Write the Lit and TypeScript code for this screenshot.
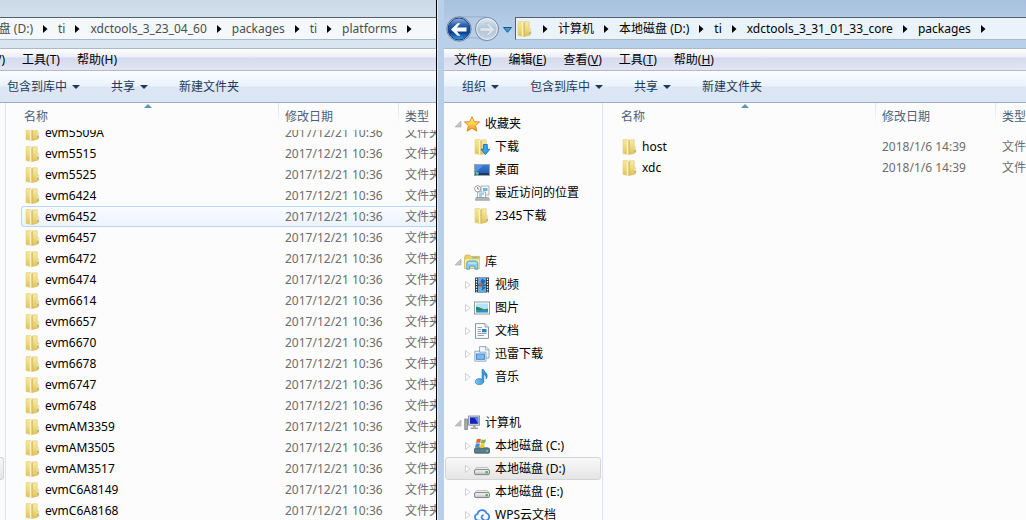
import { LitElement, html, svg, css, nothing } from "lit";
import { customElement, property } from "lit/decorators.js";
import { classMap } from "lit/directives/class-map.js";

type FileRow = { name: string; date: string; type: string; hover?: boolean };
type NavItem = { label: string; icon: string; selected?: boolean; leaf?: boolean };
type NavGroup = { label: string; icon: string; items: NavItem[] };
type MenuItem = { label: string; key: string };

const folderShape = svg`
  <path d="M1 .6H6V15.400L1 14.600Z" fill="url(#fl)" stroke="#e0c870" stroke-width=".5"/>
  <path d="M4.800 1.500 6.600 .6V15.800L4.800 15.200Z" fill="#fbf4c4"/>
  <path d="M6.400 1.500 8 1V15.400L6.400 15.800Z" fill="#d3b85c"/>
  <path d="M7.600 .8H12.200V7L13.700 8V13.200L12.200 14.400 7.600 15.400Z" fill="url(#fr)" stroke="#d9bf62" stroke-width=".5"/>
  <path d="M13 8.500v2" stroke="#fff" stroke-width=".8"/><path d="M13 10.800v2.200" stroke="#5aa9c9" stroke-width=".8"/>`;

const driveShape = svg`
  <path d="M2.6 6.5h10.8l2.1 3H.5Z" fill="#e9e9ea" stroke="#a5a7aa" stroke-width=".6"/>
  <rect x=".5" y="8.6" width="15" height="5" rx="1.4" fill="url(#dr)" stroke="#77797d" stroke-width=".9"/>
  <rect x="11.6" y="10" width="2.2" height="2.4" fill="#37c02a"/>`;

const icons: Record<string, unknown> = {
  folder: folderShape,
  star: svg`<path d="M8 .6 10.2 5.6 15.6 6 11.5 9.6 12.9 15.2 8 12.2 3.1 15.2 4.5 9.6 .4 6 5.8 5.6Z" fill="url(#st)" stroke="#dd8419" stroke-width=".9" stroke-linejoin="round"/>`,
  download: svg`${folderShape}<path d="M9.500 5.500h3.800v4.800h2.500L11.400 15.600 7 10.300h2.500Z" fill="#35a6ec" stroke="#1667ad" stroke-width=".8"/>`,
  desktop: svg`<rect x=".5" y="2.5" width="15" height="11" fill="url(#dk)" stroke="#96a3b5"/>
    <path d="M1 11.2h14v1.8H1Z" fill="#20324e"/><path d="M1 3 9 3 4 9 1 10Z" fill="#6ea8ee" opacity=".6"/>
    <circle cx="3" cy="11.3" r="1.8" fill="#2fa3dd"/><path d="M2 10.5h1v1H2zM3.2 11.5h1v1h-1z" fill="#f3d33e"/>`,
  recent: svg`<path d="M7 1h8v9H7Z" fill="#f3f5f6" stroke="#a0a5a9" stroke-width=".8"/><path d="M9 3h4.500v3H9z" fill="#6cb3e6"/>
    <path d="M3.500 7h8v6h-8Z" fill="#fff" stroke="#98a0a6" stroke-width=".8"/><path d="M5 9h5M5 11h3" stroke="#4d9bd9" stroke-width="1.2"/>
    <path d="M2 12.500h12.500l1 2.800H1.500Z" fill="#b2b7ba" stroke="#858a8e" stroke-width=".6"/>
    <circle cx="3.700" cy="3.800" r="3.100" fill="#fff" stroke="#9aa1a5" stroke-width="1"/><path d="M3.700 2v2h1.600" fill="none" stroke="#596570" stroke-width=".8"/>`,
  library: svg`<path d="M.6 3.200 1.600 1.200h4.200l1 1.200h8.600v12H.6Z" fill="#e8cf6c" stroke="#c5a544" stroke-width=".7"/>
    <path d="M1 5.200h14.400V14H1Z" fill="#f8ea9e"/><path d="M8 3.800h6" stroke="#5fb3c9" stroke-width=".9"/>
    <path d="M2.800 15.200V9.500Q2.800 7 5.300 7h5.900q2.500 0 2.500 2.500v5.700h-2.800v-3H5.600v3Z" fill="#8fd1ef" stroke="#3f93bf" stroke-width=".8"/><path d="M4 9h8.500" stroke="#d6f1fc"/>`,
  video: svg`<rect x="1" y=".5" width="14" height="15" fill="#30373c"/><rect x="4" y="1" width="8" height="6.600" fill="#5aaee6"/><rect x="4" y="8.600" width="8" height="6.600" fill="#5aaee6"/>
    <path d="M8 1.500 11.800 4 9 7.500 6.500 5ZM8 9l4 1.500-4 3Z" fill="#2f62b0"/><path d="M4 7.600 6 5.500 9 7.600ZM5 8.600h4L7 10Z" fill="#d95d31"/>
    <path d="M2.500 1.500v14M13.500 1.500v14" stroke="#fff" stroke-width="1.300" stroke-dasharray="1.400 1.200"/>`,
  picture: svg`<rect x=".5" y="2" width="15" height="12" fill="#fff" stroke="#8f9aa3"/><rect x="2" y="3.500" width="12" height="9" fill="#b4e2f7"/>
    <path d="M2 6.800Q5 6.800 8 8.400T14 8.600V10.500H2Z" fill="#347f60"/><path d="M2 10.200Q8 9.200 14 10v2.500H2Z" fill="#2493bd"/>`,
  document: svg`<path d="M1.500.6H11l3.500 3.500v11.300h-13Z" fill="#fbfcfd" stroke="#7f8b93" stroke-width=".9"/><path d="M11 .6V4.100h3.500" fill="#dfe5e9" stroke="#7f8b93" stroke-width=".7"/>
    <path d="M3.500 4.500H8M3.500 6.500H7M3.500 8.500H7M3.500 10.500H12.500M3.500 12.500H10" stroke="#8c97ba" stroke-width=".9"/><rect x="8" y="6" width="4.500" height="3.300" fill="#2d80c4"/>`,
  thunder: svg`<path d="M5.500.6H12L15 3.600V12H5.500Z" fill="#f1f6fa" stroke="#8aa0b2" stroke-width=".9"/><path d="M11.500.6v3.300H15" fill="none" stroke="#8aa0b2" stroke-width=".8"/>
    <path d="M.8 5.200h4.700v1H12v9H.8Z" fill="#e6f2fb" stroke="#819cb2" stroke-width=".8"/><rect x="2.400" y="8" width="8" height="5.300" fill="#79bdf0" stroke="#3b83c4" stroke-width=".9"/>`,
  music: svg`<path d="M8 .5h1.600c.3 2.400 4 3.200 3.600 6.800-.1 1.300-.8 2.200-1.200 2.600.5-2.300-.5-3.800-2.200-4.400v7C9.800 14.600 7.600 15.600 5.200 15.600 2.800 15.600 1.200 14.500 1.200 12.700 1.200 10.800 3.100 9.600 5.200 9.600c1 0 2 .2 2.800.7Z" fill="url(#mu)" stroke="#1e70b3" stroke-width=".6"/>`,
  computer: svg`<rect x="4.600" y="1" width="11" height="9.200" fill="#d2d5d9" stroke="#7e858d" stroke-width=".8"/><rect x="6" y="2.400" width="8.200" height="6.400" fill="#1123b8"/><path d="M10.500 2.400h3.700v6.400Z" fill="#5b86ee"/>
    <path d="M9 10.200h2.600v2H9ZM6.500 12.400h7.500v1.500H6.500Z" fill="#9da2a8"/><rect x=".8" y="4" width="2.600" height="10.600" fill="#a9aeb3" stroke="#6c7278" stroke-width=".7"/><path d="M1.400 6h1.400" stroke="#3cc43a"/>`,
  system: svg`<path d="M2.400 9h11l2.100 2H.5Z" fill="#8fa6ad"/><rect x=".5" y="10.200" width="15" height="5" rx="1" fill="#587f8b" stroke="#405c66" stroke-width=".8"/><rect x="12" y="12" width="2" height="2" fill="#4dd83b"/>
    <path d="M2.800 1.200Q5 .2 7 1.200L6.200 5Q4.300 4.200 2 5Z" fill="#e7642b"/><path d="M7.600 1.400Q9.500 2.200 12 1.200L11 5Q9 6 6.900 5.200Z" fill="#7db93f"/>
    <path d="M1.800 5.700Q4 4.800 6 5.700L5.200 9.500Q3.200 8.700 1 9.500Z" fill="#3f8fdc"/><path d="M6.700 6Q8.800 6.600 10.900 5.700L10 9.500Q8 10.400 5.900 9.700Z" fill="#f5c12e"/>`,
  drive: driveShape,
  cloud: svg`<path d="M6.200 13.500H4.100A3.300 3.300 0 0 1 3.500 7 4.700 4.700 0 0 1 12.600 6.300 3.700 3.700 0 0 1 12 13.500C9.500 13.500 8.700 12.400 7.900 11.200 7.200 10 7.600 8.600 9 8.200" fill="none" stroke="#3e80ee" stroke-width="1.700" stroke-linecap="round"/>`,
};

const icon = (name: string) =>
  html`<svg class="icon" viewBox="0 0 16 16" aria-hidden="true">${icons[name]}</svg>`;

const row = (name: string, date: string): FileRow => ({ name, date, type: "文件夹" });

const platformRows: FileRow[] = [
  "evm5509A", "evm5515", "evm5525", "evm6424", "evm6452", "evm6457", "evm6472",
  "evm6474", "evm6614", "evm6657", "evm6670", "evm6678", "evm6747", "evm6748",
  "evmAM3359", "evmAM3505", "evmAM3517", "evmC6A8149", "evmC6A8168",
].map((n) => ({ ...row(n, "2017/12/21 10:36"), hover: n === "evm6452" }));

const packageRows: FileRow[] = [row("host", "2018/1/6 14:39"), row("xdc", "2018/1/6 14:39")];

const menus: MenuItem[] = [
  { label: "文件", key: "F" },
  { label: "编辑", key: "E" },
  { label: "查看", key: "V" },
  { label: "工具", key: "T" },
  { label: "帮助", key: "H" },
];

const groups: NavGroup[] = [
  {
    label: "收藏夹", icon: "star", items: [
      { label: "下载", icon: "download", leaf: true },
      { label: "桌面", icon: "desktop", leaf: true },
      { label: "最近访问的位置", icon: "recent", leaf: true },
      { label: "2345下载", icon: "folder", leaf: true },
    ],
  },
  {
    label: "库", icon: "library", items: [
      { label: "视频", icon: "video" },
      { label: "图片", icon: "picture" },
      { label: "文档", icon: "document" },
      { label: "迅雷下载", icon: "thunder" },
      { label: "音乐", icon: "music" },
    ],
  },
  {
    label: "计算机", icon: "computer", items: [
      { label: "本地磁盘 (C:)", icon: "system" },
      { label: "本地磁盘 (D:)", icon: "drive", selected: true },
      { label: "本地磁盘 (E:)", icon: "drive" },
      { label: "WPS云文档", icon: "cloud" },
    ],
  },
];

@customElement("explorer-window")
export class ExplorerWindow extends LitElement {
  @property({ type: Array }) crumbs: string[] = [];
  @property({ type: Array }) rows: FileRow[] = [];
  @property({ type: Boolean, reflect: true }) active = false;
  @property({ type: Number }) scrolled = 0;

  static styles = css`
    :host { display: flex; flex-direction: column; min-width: 0; min-height: 0; overflow: hidden; background: #d8e5f0; }
    :host([active]) { background: #b9d0ea; padding-left: 6px; }
    a, button { font: inherit; color: inherit; text-decoration: none; background: none; border: 0; padding: 0; margin: 0; text-align: left; white-space: nowrap; cursor: default; flex: none; }
    .defs { position: absolute; width: 0; height: 0; }
    .icon { width: 16px; height: 16px; flex: none; display: block; }
    .top { flex: none; height: 48px; box-sizing: border-box; padding-top: 17px; display: flex; align-items: flex-start; background: linear-gradient(#cbd9e7, #d9e5f0 34px); }
    :host([active]) .top { background: linear-gradient(#a8c1de, #b9d0ea 34px); }
    .travel { flex: none; width: 71px; height: 26px; margin-top: -1px; display: block; }
    .address { flex: 1; min-width: 0; height: 23px; box-sizing: border-box; display: flex; align-items: center; overflow: hidden; border-top: 1px solid #54606d; border-bottom: 1px solid #a9b9c8; background: #f4f8fb; color: #4c4c4c; }
    :host([active]) .address { border-left: 1px solid #54606d; padding-left: 1px; background: #eaf2fa; color: #000; }
    .arrow { width: 5px; height: 8px; margin: 0 10px; flex: none; fill: #000; }
    .cut { display: flex; justify-content: flex-end; overflow: hidden; }
    .crumbcut { width: 33px; }
    .menucut { width: 5px; margin-right: 17px; }
    .menu { flex: none; height: 23px; box-sizing: border-box; display: flex; align-items: center; border-top: 1px solid #a9b9cb; border-bottom: 1px solid #b3b8cb; background: linear-gradient(#fff, #eceef6 8px, #d5dbed 9px, #e1e5f5); color: #000; }
    :host([active]) .menu { padding-left: 10px; }
    .menu button { margin-right: 17px; }
    .tools { flex: none; height: 32px; box-sizing: border-box; display: flex; align-items: center; gap: 31px; padding-left: 7px; border-bottom: 1px solid #9dadc2; background: linear-gradient(#fbfdff, #e9f3fc 15px, #dce6f4 16px, #dbe6f4); color: #1e395b; }
    :host([active]) .tools { padding-left: 18px; }
    .drop { display: inline-flex; align-items: center; gap: 5px; }
    .drop svg { width: 8px; height: 4px; fill: #1e395b; }
    .body { flex: 1; min-height: 0; display: flex; background: #fcfcfc; }
    .nav { flex: none; width: 159px; box-sizing: border-box; border-right: 1px solid #d6e5f5; padding: 9px 1px 0; overflow: hidden; color: #000; }
    .group { margin-bottom: 23px; }
    .item { width: 100%; height: 23px; box-sizing: border-box; display: flex; align-items: center; padding-left: 8px; border: 1px solid transparent; border-radius: 3px; }
    .item .icon { margin: 0 5px 0 2px; }
    .item.child { padding-left: 18px; }
    .item.selected { border-color: #d4d4d4; background: linear-gradient(#f8f8f8, #e5e5e5); }
    .twist { width: 8px; height: 8px; flex: none; }
    .sliver { flex: none; width: 6px; box-sizing: border-box; border-right: 1px solid #d6e5f5; padding-top: 354px; }
    .sliver div { height: 23px; width: 4px; box-sizing: border-box; border: 1px solid #d4d4d4; border-left: 0; border-radius: 0 3px 3px 0; background: linear-gradient(#f8f8f8, #e5e5e5); }
    .list { flex: 1; min-width: 0; overflow: hidden; padding-left: 15px; }
    table { table-layout: fixed; width: 477px; border-spacing: 0; color: #6d6d6d; }
    .c1 { width: 257px; } .c2 { width: 120px; }
    th { position: sticky; top: 0; z-index: 1; height: 27px; padding: 0 0 0 7px; text-align: left; font-weight: 400; color: #4c607a; background: linear-gradient(#d6e5f5, #fcfcfc) 0 0 / 1px 22px no-repeat #fcfcfc; }
    th:first-child { padding-left: 3px; background: #fcfcfc; }
    .sort { position: absolute; top: 1px; left: 123px; width: 8px; height: 4px; }
    td { height: 21px; padding: 0 0 0 7px; box-sizing: border-box; white-space: nowrap; overflow: hidden; }
    td:first-child { padding-left: 4px; color: #000; }
    .file { display: flex; align-items: center; gap: 4px; }
    .hover td { background: linear-gradient(#fafcff, #ecf3fd); border-top: 1px solid #b8d6fb; border-bottom: 1px solid #b8d6fb; }
    .hover td:first-child { border-left: 1px solid #b8d6fb; border-radius: 3px 0 0 3px; padding-left: 3px; }
    :host([active]) tbody::before { content: ""; display: block; height: 6px; }
  `;

  firstUpdated() {
    this.renderRoot.querySelector(".list")!.scrollTop = this.scrolled;
  }

  private defs() {
    const grad = (id: string, stops: string[], across = false) => svg`
      <linearGradient id=${id} x1="0" y1="0" x2=${across ? 1 : 0} y2=${across ? 0 : 1}>
        ${stops.map((c, i) => svg`<stop offset=${i / (stops.length - 1)} stop-color=${c}/>`)}
      </linearGradient>`;
    return html`<svg class="defs" aria-hidden="true"><defs>
      ${grad("fl", ["#f5e79a", "#efda7c", "#dcc15c"])}
      ${grad("fr", ["#f8ecaa", "#eeda82", "#dfc158"])}
      ${grad("st", ["#fff3a0", "#ffd04e", "#f58b22"])}
      ${grad("dk", ["#3f80d8", "#1c4fa6"])}
      ${grad("mu", ["#7cc8f4", "#1d86cf"], true)}
      ${grad("dr", ["#ffffff", "#b9bbbf"])}
      ${grad("bk", ["#8fb4de", "#2a5fae", "#0c3d92", "#2fa7ec"])}
      ${grad("fw", ["#dfe8f2", "#b4c5d8", "#c8d6e6"])}
    </defs></svg>`;
  }

  private travel() {
    return html`<svg class="travel" viewBox="0 0 71 26" aria-hidden="true">
      <path d="M15 .8H42M15 25 Q28 18 42 25" fill="none" stroke="#8ba3bf" opacity=".7"/>
      <circle cx="15" cy="13" r="12.2" fill="#e4edf7" stroke="#6b809b"/>
      <circle cx="15" cy="13" r="11" fill="url(#bk)" stroke="#1b3f7c"/>
      <path d="M7 13.500 13.500 7.200H16.500L12.800 11.600H22.500V15.400H12.800L16.500 19.800H13.500Z" fill="#fff"/>
      <circle cx="43" cy="13" r="11.500" fill="url(#fw)" stroke="#73869d"/>
      <circle cx="43" cy="13" r="10.300" fill="none" stroke="#e6eef7"/>
      <path d="M51 13.500 44.500 7.200H41.500L45.200 11.600H36V15.400H45.200L41.500 19.800H44.500Z" fill="#dce5ee" stroke="#a4b5c8" stroke-width=".6"/>
      <path d="M59.500 11.500H67.500L63.500 16.300Z" fill="#3a9fd4" stroke="#14487c" stroke-width=".9"/>
    </svg>`;
  }

  private crumbArrow() {
    return html`<svg class="arrow" viewBox="0 0 5 8" aria-hidden="true"><path d="M0 0 4.500 4 0 8Z"/></svg>`;
  }

  private drop(label: string) {
    return html`<button class="drop">${label}<svg viewBox="0 0 8 4" aria-hidden="true"><path d="M0 0H8L4 4Z"/></svg></button>`;
  }

  private menuBar() {
    if (this.active)
      return menus.map((m) => html`<button>${m.label}(<u>${m.key}</u>)</button>`);
    return html`<span class="cut menucut"><a href="#">查看(V)</a></span>
      ${menus.slice(3).map((m) => html`<button>${m.label}(${m.key})</button>`)}`;
  }

  private navPane() {
    if (!this.active) return html`<div class="sliver"><div></div></div>`;
    const open = svg`<path d="M7 1V7H1Z" fill="#c4c4c4" stroke="#a8a8a8" stroke-width=".6"/>`;
    const closed = svg`<path d="M1.500 0.500 6 4 1.500 7.500Z" fill="#fff" stroke="#c9c9c9" stroke-width=".9"/>`;
    return html`<nav class="nav">${groups.map((g) => html`<div class="group">
      <button class="item"><svg class="twist" viewBox="0 0 8 8">${open}</svg>${icon(g.icon)}${g.label}</button>
      ${g.items.map((i) => html`<button class=${classMap({ item: true, child: true, selected: !!i.selected })}>
        <svg class="twist" viewBox="0 0 8 8">${i.leaf ? nothing : closed}</svg>${icon(i.icon)}${i.label}</button>`)}
    </div>`)}</nav>`;
  }

  render() {
    return html`${this.defs()}
      <div class="top">
        ${this.active ? this.travel() : nothing}
        <div class="address">
          ${this.active ? html`${icon("folder")}${this.crumbArrow()}` : nothing}
          ${this.crumbs.map((c, i) => html`${!this.active && i === 0
            ? html`<span class="cut crumbcut"><a href="#">${c}</a></span>`
            : html`<a href="#">${c}</a>`}${this.crumbArrow()}`)}
        </div>
      </div>
      <div class="menu">${this.menuBar()}</div>
      <div class="tools">
        ${this.active ? this.drop("组织") : nothing}
        ${this.drop("包含到库中")}${this.drop("共享")}
        <button>新建文件夹</button>
      </div>
      <div class="body">
        ${this.navPane()}
        <div class="list"><table>
          <colgroup><col class="c1"><col class="c2"><col></colgroup>
          <thead><tr>
            <th>名称<svg class="sort" viewBox="0 0 8 4" aria-hidden="true"><path d="M0 4 4 0 8 4Z" fill="#5f94b8"/></svg></th>
            <th>修改日期</th><th>类型</th>
          </tr></thead>
          <tbody>${this.rows.map((r) => html`<tr class=${classMap({ hover: !!r.hover })}>
            <td><div class="file">${icon("folder")}${r.name}</div></td><td>${r.date}</td><td>${r.type}</td>
          </tr>`)}</tbody>
        </table></div>
      </div>`;
  }
}

@customElement("app-root")
export class AppRoot extends LitElement {
  static styles = css`
    :host { display: grid; grid-template-columns: minmax(0, 436fr) 2px minmax(0, 588fr); height: 100vh; overflow: hidden; font: 12px/16px "Noto Sans", "Noto Sans CJK SC", sans-serif; }
    .edge { background: linear-gradient(90deg, #000 1px, #e3edf7 1px); }
  `;

  render() {
    return html`
      <explorer-window
        .crumbs=${["本地磁盘 (D:)", "ti", "xdctools_3_23_04_60", "packages", "ti", "platforms"]}
        .rows=${platformRows} .scrolled=${8}></explorer-window>
      <div class="edge"></div>
      <explorer-window active
        .crumbs=${["计算机", "本地磁盘 (D:)", "ti", "xdctools_3_31_01_33_core", "packages"]}
        .rows=${packageRows}></explorer-window>`;
  }
}
